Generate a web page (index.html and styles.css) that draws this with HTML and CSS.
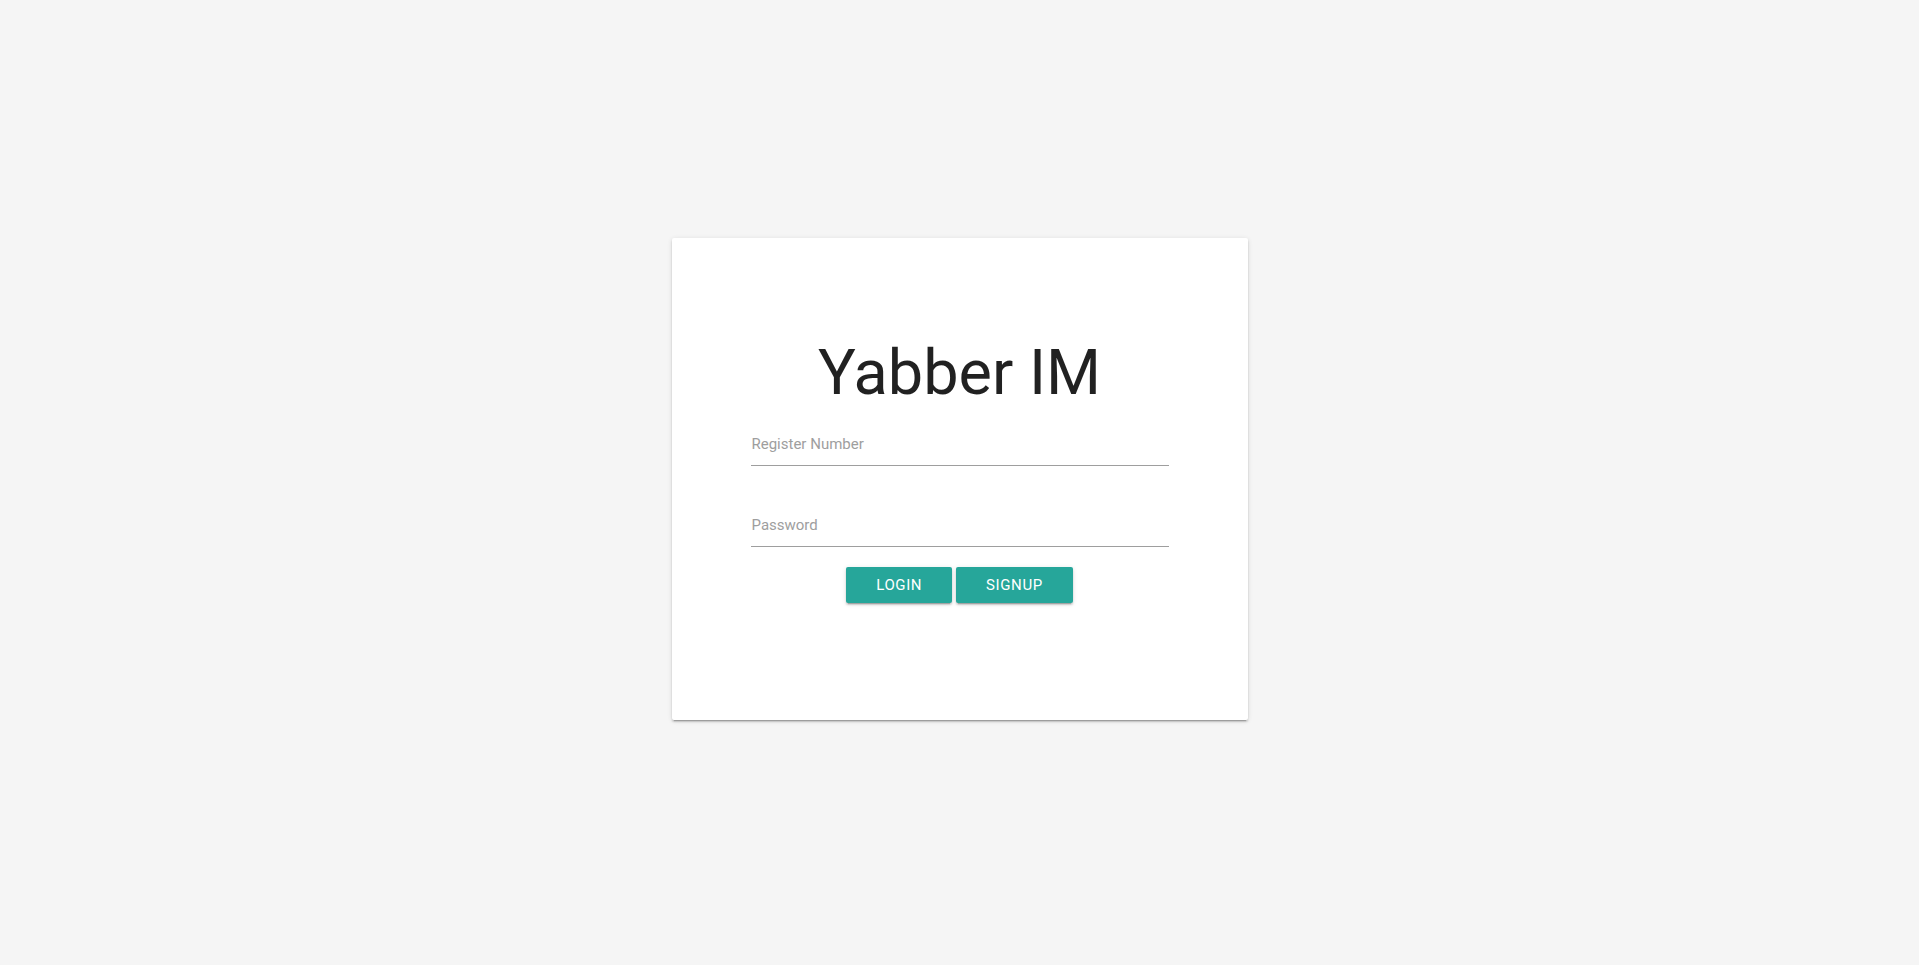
FILE: index.html
```html
<!DOCTYPE html>
<html lang="en">
<head>
<meta charset="utf-8">
<title>Yabber IM</title>
<link rel="stylesheet" href="styles.css">
</head>
<body>
<main class="page">
  <section class="card">
    <h1 class="title">Yabber IM</h1>
    <form class="form">
      <div class="field"><label class="label">Register Number</label></div>
      <div class="field field-second"><label class="label">Password</label></div>
      <div class="actions">
        <button type="button" class="btn">Login</button>
        <button type="button" class="btn">Signup</button>
      </div>
    </form>
  </section>
</main>
</body>
</html>
```

FILE: styles.css
```css
html, body {
  margin: 0;
  padding: 0;
  background: #f5f5f5;
  font-family: Roboto, "Liberation Sans", sans-serif;
}
.page {
  display: flex;
  justify-content: center;
  padding-top: 238px;
  height: 965px;
  box-sizing: border-box;
}
.card {
  width: 576px;
  height: 482px;
  box-sizing: border-box;
  background: #fff;
  border-radius: 2px;
  box-shadow: 0 2px 2px 0 rgba(0,0,0,0.14), 0 1px 5px 0 rgba(0,0,0,0.12), 0 3px 1px -2px rgba(0,0,0,0.2);
  padding-top: 100px;
  display: flex;
  flex-direction: column;
  align-items: center;
}
.title {
  margin: 0;
  font-size: 63px;
  line-height: 70px;
  font-weight: 400;
  color: rgba(0,0,0,0.87);
}
.form {
  width: 418px;
  margin-top: 13px;
  display: flex;
  flex-direction: column;
}
.field {
  height: 45px;
  box-sizing: border-box;
  padding-top: 14px;
  padding-left: 1px;
  border-bottom: 1px solid #9e9e9e;
}
.field-second {
  margin-top: 36px;
}
.label {
  display: block;
  font-size: 15px;
  line-height: 18px;
  color: #9e9e9e;
}
.actions {
  margin-top: 20px;
  display: flex;
  justify-content: center;
  gap: 4px;
}
.btn {
  height: 36px;
  line-height: 36px;
  padding: 0 30px;
  border: none;
  border-radius: 2px;
  background: #26a69a;
  color: #fff;
  font-family: Roboto, "Liberation Sans", sans-serif;
  font-size: 15px;
  letter-spacing: 0.6px;
  text-transform: uppercase;
  box-shadow: 0 2px 2px 0 rgba(0,0,0,0.14), 0 1px 5px 0 rgba(0,0,0,0.12), 0 3px 1px -2px rgba(0,0,0,0.2);
  cursor: pointer;
}
```
